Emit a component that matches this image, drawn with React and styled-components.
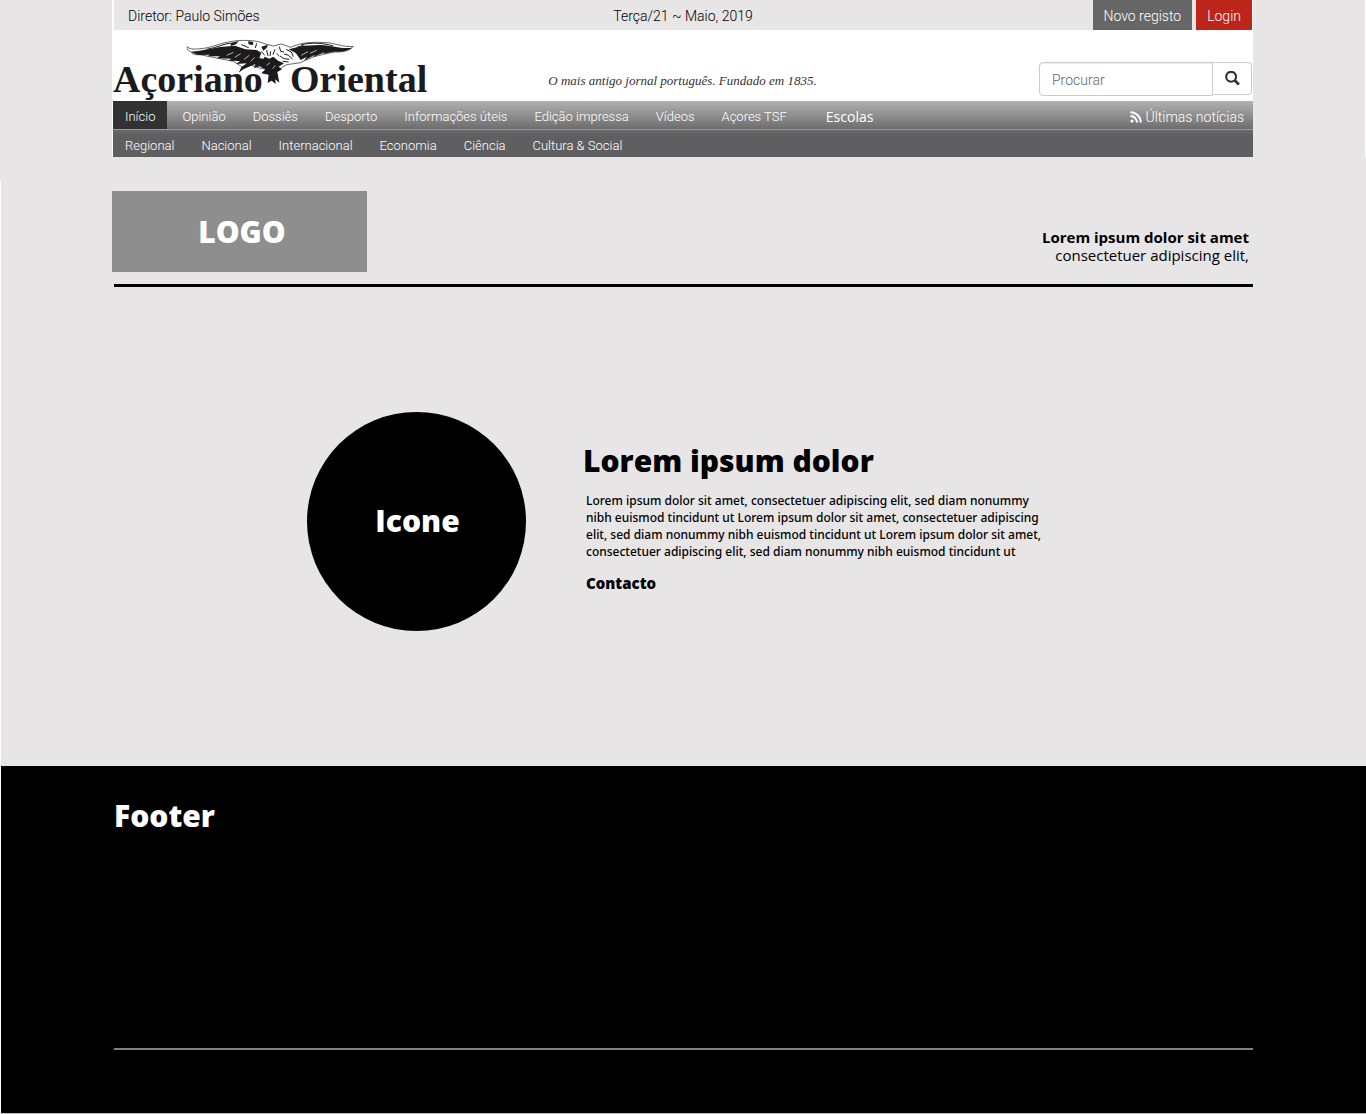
import React from "react";
import styled, { createGlobalStyle } from "styled-components";

const GlobalStyle = createGlobalStyle`
  *, *::before, *::after { box-sizing: border-box; }
  body {
    margin: 0;
    background: #e7e5e6;
    color: #000;
    font-family: "Open Sans", "Noto Sans", sans-serif;
  }
  h1, h2, p, ul { margin: 0; padding: 0; }
  ul { list-style: none; }
  a { color: inherit; text-decoration: none; }
`;

const Container = styled.div`
  max-width: 1142px;
  margin: 0 auto;
  padding-right: 1px;
`;

/* ---------- header ---------- */

const Header = styled.header`
  font-family: Roboto, sans-serif;
  font-weight: 300;
  box-shadow: inset -1px 0 #fff;
`;

const HeaderFrame = styled.div`
  border-left: 1px solid #fff;
  background: #fff;
`;

const ThreeColumns = styled.div`
  display: grid;
  grid-template-columns: 1fr auto 1fr;
`;

const TopBar = styled(ThreeColumns)`
  height: 30px;
  margin: 0 1px;
  background: #e7e5e6;
  font-size: 14px;
  line-height: 32px;
`;

const Director = styled.span`
  padding-left: 14px;
`;

const Account = styled.div`
  display: flex;
  justify-content: flex-end;
  gap: 4px;
`;

const AccountButton = styled.button`
  height: 30px;
  padding: 2px 11px 0;
  border: 0;
  background: ${(p) => (p.$primary ? "#bd241a" : "#666")};
  color: #fff;
  font: inherit;
  line-height: 28px;
`;

const Masthead = styled(ThreeColumns)`
  height: 71px;
  padding-right: 1px;
`;

const Brand = styled.a`
  display: block;
  height: 71px;
`;

const BrandArt = styled.svg`
  display: block;
`;

const BrandText = styled.text`
  font-family: "Liberation Serif", serif;
  font-size: 38px;
  font-weight: 700;
  fill: #1c1a1c;
`;

const Tagline = styled.p`
  align-self: end;
  padding-bottom: 12px;
  color: #333;
  font: italic 400 13px/16px "Liberation Serif", serif;
`;

const Search = styled.form`
  display: flex;
  align-self: start;
  justify-content: flex-end;
  padding-top: 32px;
`;

const SearchInput = styled.input`
  width: 174px;
  height: 34px;
  padding: 2px 12px 0;
  border: 1px solid #ccc;
  border-radius: 4px 0 0 4px;
  background: #fff;
  box-shadow: inset 0 1px 1px rgba(0, 0, 0, 0.08);
  font: inherit;
  font-size: 14px;
  &::placeholder { color: #666; opacity: 1; }
`;

const SearchButton = styled.button`
  display: grid;
  place-items: center;
  width: 39px;
  height: 33px;
  padding: 0;
  border: 1px solid #ccc;
  border-left: 0;
  border-radius: 0 4px 4px 0;
  background: #fff;
`;

const Nav = styled.nav`
  color: #fff;
  font-size: 13px;
`;

const NavRow = styled.div`
  display: flex;
  justify-content: space-between;
  height: 28px;
  background: ${(p) =>
    p.$sub
      ? "linear-gradient(#6a6a6b, #5f5f61 5px)"
      : "linear-gradient(#b1b1b1, #6d6d6d)"};
  border-top: ${(p) => (p.$sub ? "1px solid #999" : "0")};
`;

const NavList = styled.ul`
  display: flex;
  gap: 3px;
`;

const NavLink = styled.a`
  display: block;
  height: 28px;
  padding: 0 12px;
  line-height: 32px;
  background: ${(p) => (p.$active ? "#323232" : "transparent")};
`;

const SchoolsLink = styled(NavLink)`
  margin-left: 12px;
  font-family: "Open Sans", sans-serif;
  font-size: 14px;
  font-weight: 400;
`;

const LatestLink = styled.a`
  display: flex;
  align-items: center;
  gap: 3px;
  height: 32px;
  padding-right: 9px;
  font-size: 14px;
  line-height: 32px;
`;

/* ---------- content ---------- */

const Main = styled.main`
  margin-top: 24px;
  padding: 10px 0 135px;
  box-shadow: inset 1px 0 #fff;
`;

const Intro = styled.div`
  display: flex;
  justify-content: space-between;
  align-items: flex-end;
`;

const LogoBox = styled.div`
  display: grid;
  place-items: center;
  width: 255px;
  height: 81px;
  padding-left: 5px;
  background: #8e8e8e;
  color: #fff;
  font-size: 30px;
  font-weight: 800;
`;

const IntroText = styled.p`
  padding: 0 4px 8px 0;
  font-size: 15px;
  line-height: 18px;
  text-align: right;
`;

const Rule = styled.hr`
  height: ${(p) => (p.$thin ? 2 : 3)}px;
  margin: 0 0 0 2px;
  border: 0;
  background: ${(p) => (p.$thin ? "#808080" : "#000")};
`;

const IntroRule = styled(Rule)`
  margin-top: 12px;
`;

const Feature = styled.section`
  display: flex;
  justify-content: center;
  gap: 57px;
  padding-top: 125px;
`;

const Disc = styled.div`
  display: grid;
  place-items: center;
  flex: none;
  width: 219px;
  height: 219px;
  padding: 0 0 2px 2px;
  border-radius: 50%;
  background: #000;
  color: #fff;
  font-size: 30px;
  font-weight: 800;
`;

const FeatureText = styled.div`
  width: 475px;
  padding-top: 29px;
`;

const Title = styled.h2`
  font-size: 30px;
  font-weight: 800;
  line-height: 40px;
`;

const Copy = styled.p`
  padding: 11px 0 0 3px;
  font-family: "Noto Sans", "Open Sans", sans-serif;
  font-size: 12px;
  font-weight: 500;
  line-height: 17px;
  white-space: nowrap;
`;

const Contact = styled.a`
  display: inline-block;
  padding: 13px 0 0 3px;
  font-size: 15px;
  font-weight: 800;
  line-height: 20px;
`;

/* ---------- footer ---------- */

const Footer = styled.footer`
  padding: 30px 0 63px;
  border-bottom: 1px solid #bbb;
  background: #000;
  box-shadow: inset 1px 0 #fff;
  color: #fff;
`;

const FooterBody = styled.div`
  min-height: 252px;
  padding-left: 2px;
`;

const sections = [
  "Início", "Opinião", "Dossiês", "Desporto", "Informações úteis",
  "Edição impressa", "Vídeos", "Açores TSF",
];

const topics = [
  "Regional", "Nacional", "Internacional", "Economia", "Ciência",
  "Cultura & Social",
];

function EagleLogo() {
  return (
    <BrandArt width="318" height="71" viewBox="0 0 318 71" role="img" aria-label="Açoriano Oriental">
      <BrandText x="0" y="62">Açoriano</BrandText>
      <BrandText x="177" y="62">Oriental</BrandText>
      <g transform="translate(-13 -30) scale(0.33333)">
        <path d="M262 140 C268 150 290 148 318 144 C345 138 360 130 392 125 C420 119 470 119 496 132 L520 138 L545 132 L572 142 C600 128 640 124 690 129 C715 134 740 142 760 139 C750 152 728 157 706 156 C680 160 660 166 642 170 C625 178 610 182 602 188 L560 194 L540 206 L484 206 L455 196 L425 200 L400 184 C370 178 330 170 300 164 C282 166 274 160 273 156 C264 152 260 146 262 140Z" fill="#fff" stroke="#1c1a1c" strokeWidth="2" />
        <path d="M273 155 C300 154 330 146 360 141 L405 137 L436 148 L470 150 L484 158 L478 174 L496 178 L482 198 L462 204 L466 192 L430 208 L416 218 L424 202 L440 190 L408 192 L420 183 L385 182 L394 176 L350 175 L360 169 L322 169 L330 164 L296 165 L280 160Z" fill="#1c1a1c" />
        <path d="M566 148 L610 137 L660 135 C700 137 728 148 756 143 C740 156 715 156 700 155 L668 162 L674 157 L638 172 L645 164 L612 182 L620 171 L602 180 L588 160Z" fill="#1c1a1c" />
        <path d="M486 184 L494 170 L508 176 L520 170 L534 182 L552 190 L536 200 L546 208 L532 216 L538 248 L526 238 L527 252 L515 242 L503 249 L506 224 L484 220 L496 208 L480 200Z" fill="#1c1a1c" />
        <path d="M392 129 L416 123 L408 133 L392 138Z M444 124 L460 126 L458 136 L446 133Z M484 140 L504 134 L500 144 L490 152Z" fill="#1c1a1c" />
        <path d="M320 148 C350 143 370 132 392 129 M424 134 l22 9 M470 130 l-4 14 M484 154 l10 12 M500 150 l4 18 M512 154 l-2 14 M525 148 l-6 16 M538 140 l4 14 10 2 M558 148 l16 8 6 14 M552 162 l14 4 12 12 M540 168 l12 8 16 2 M530 160 l8 8 M548 184 l18 2 M604 134 C640 126 672 130 700 138 M590 142 l20 -6" fill="none" stroke="#1c1a1c" strokeWidth="3" />
        <path d="M380 166 l20 -9 M404 172 l18 -11 M432 178 l16 -12 M452 184 l12 -12 M604 166 l20 -11 M630 160 l20 -9 M500 196 l10 -8 M518 206 l8 -10" fill="none" stroke="#fff" strokeWidth="2" />
      </g>
    </BrandArt>
  );
}

export default function App() {
  return (
    <>
      <GlobalStyle />
      <Header>
        <Container>
          <HeaderFrame>
            <TopBar>
              <Director>Diretor: Paulo Simões</Director>
              <span>Terça/21 ~ Maio, 2019</span>
              <Account>
                <AccountButton type="button">Novo registo</AccountButton>
                <AccountButton type="button" $primary>Login</AccountButton>
              </Account>
            </TopBar>
            <Masthead>
              <Brand href="#"><EagleLogo /></Brand>
              <Tagline>O mais antigo jornal português. Fundado em 1835.</Tagline>
              <Search role="search">
                <SearchInput type="search" placeholder="Procurar" aria-label="Procurar" />
                <SearchButton type="button" aria-label="Pesquisar">
                  <svg width="15" height="15" viewBox="0 0 14 14" fill="none" stroke="#333">
                    <circle cx="5.7" cy="5.4" r="4.6" strokeWidth="2" />
                    <path d="M9 8.7l4 4" strokeWidth="2.6" />
                  </svg>
                </SearchButton>
              </Search>
            </Masthead>
            <Nav>
              <NavRow>
                <NavList>
                  {sections.map((name, i) => (
                    <li key={name}><NavLink href="#" $active={i === 0}>{name}</NavLink></li>
                  ))}
                  <li><SchoolsLink href="#">Escolas</SchoolsLink></li>
                </NavList>
                <LatestLink href="#">
                  <svg width="12" height="12" viewBox="0 0 12 12" fill="none" stroke="#fff" strokeWidth="2">
                    <circle cx="2" cy="10" r="1.6" fill="#fff" stroke="none" />
                    <path d="M0.4 5 A6.6 6.6 0 0 1 7 11.6 M0.4 1.2 A10.4 10.4 0 0 1 10.8 11.6" />
                  </svg>
                  Últimas notícias
                </LatestLink>
              </NavRow>
              <NavRow $sub>
                <NavList>
                  {topics.map((name) => (
                    <li key={name}><NavLink href="#">{name}</NavLink></li>
                  ))}
                </NavList>
              </NavRow>
            </Nav>
          </HeaderFrame>
        </Container>
      </Header>

      <Main>
        <Container>
          <Intro>
            <LogoBox>LOGO</LogoBox>
            <IntroText>
              <b>Lorem ipsum dolor sit amet</b>
              <br />
              consectetuer adipiscing elit,
            </IntroText>
          </Intro>
          <IntroRule />
          <Feature>
            <Disc>Icone</Disc>
            <FeatureText>
              <Title>Lorem ipsum dolor</Title>
              <Copy>
                Lorem ipsum dolor sit amet, consectetuer adipiscing elit, sed diam nonummy
                <br />
                nibh euismod tincidunt ut Lorem ipsum dolor sit amet, consectetuer adipiscing
                <br />
                elit, sed diam nonummy nibh euismod tincidunt ut Lorem ipsum dolor sit amet,
                <br />
                consectetuer adipiscing elit, sed diam nonummy nibh euismod tincidunt ut
              </Copy>
              <Contact href="#">Contacto</Contact>
            </FeatureText>
          </Feature>
        </Container>
      </Main>

      <Footer>
        <Container>
          <FooterBody>
            <Title>Footer</Title>
          </FooterBody>
          <Rule $thin />
        </Container>
      </Footer>
    </>
  );
}
